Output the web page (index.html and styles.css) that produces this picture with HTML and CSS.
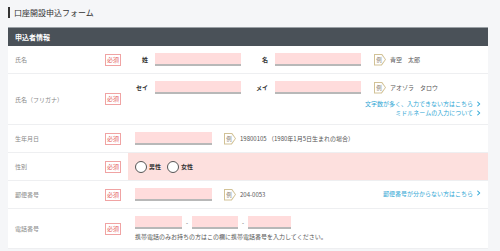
FILE: index.html
```html
<!DOCTYPE html>
<html lang="ja">
<head>
    <meta charset="UTF-8">
    <meta name="viewport" content="width=device-width, initial-scale=1.0">
    <title>口座開設申込フォーム</title>
    <link rel="stylesheet" href="styles.css">
</head>
<body>
    <h1 class="title">口座開設申込フォーム</h1>
    <section class="panel">
        <h2 class="panel-head">申込者情報</h2>

        <div class="row">
            <div class="label"><span>氏名</span><span class="req">必須</span></div>
            <div class="field">
                <div class="line">
                    <span class="sub">姓</span><input class="input w86" type="text">
                    <span class="sub next">名</span><input class="input w86" type="text">
                    <span class="ex"><span class="ex-mark"><span class="ex-inner">例</span></span>青空　太郎</span>
                </div>
            </div>
        </div>

        <div class="row">
            <div class="label"><span>氏名（フリガナ）</span><span class="req">必須</span></div>
            <div class="field">
                <div class="line">
                    <span class="sub">セイ</span><input class="input w86" type="text">
                    <span class="sub next">メイ</span><input class="input w86" type="text">
                    <span class="ex"><span class="ex-mark"><span class="ex-inner">例</span></span>アオゾラ　タロウ</span>
                </div>
                <div class="links">
                    <a href="#">文字数が多く、入力できない方はこちら<svg class="chev" viewBox="0 0 6 8"><polyline points="1.5,1 4.5,4 1.5,7"/></svg></a>
                    <a href="#">ミドルネームの入力について<svg class="chev" viewBox="0 0 6 8"><polyline points="1.5,1 4.5,4 1.5,7"/></svg></a>
                </div>
            </div>
        </div>

        <div class="row">
            <div class="label"><span>生年月日</span><span class="req">必須</span></div>
            <div class="field">
                <div class="line">
                    <input class="input w77" type="text">
                    <span class="ex wide"><span class="ex-mark"><span class="ex-inner">例</span></span>19800105 （1980年1月5日生まれの場合）</span>
                </div>
            </div>
        </div>

        <div class="row">
            <div class="label"><span>性別</span><span class="req">必須</span></div>
            <div class="field pink">
                <div class="line">
                    <label class="radio"><span class="circle"></span>男性</label>
                    <label class="radio"><span class="circle"></span>女性</label>
                </div>
            </div>
        </div>

        <div class="row">
            <div class="label"><span>郵便番号</span><span class="req">必須</span></div>
            <div class="field">
                <div class="line">
                    <input class="input w77" type="text">
                    <span class="ex wide"><span class="ex-mark"><span class="ex-inner">例</span></span>204-0053</span>
                    <a class="link-right" href="#">郵便番号が分からない方はこちら<svg class="chev" viewBox="0 0 6 8"><polyline points="1.5,1 4.5,4 1.5,7"/></svg></a>
                </div>
            </div>
        </div>

        <div class="row">
            <div class="label"><span>電話番号</span><span class="req">必須</span></div>
            <div class="field">
                <div class="line">
                    <input class="input w47" type="text">
                    <span class="dash">-</span>
                    <input class="input w46" type="text">
                    <span class="dash">-</span>
                    <input class="input w43" type="text">
                </div>
                <p class="note">携帯電話のみお持ちの方はこの欄に携帯電話番号を入力してください。</p>
            </div>
        </div>
    </section>
</body>
</html>
```

FILE: styles.css
```css
body {
    font-family: "Noto Sans CJK JP", "Noto Sans", sans-serif;
    background-color: #f5f6f8;
    color: #333;
    margin: 0;
    padding: 0;
    font-size: 6px;
}
.title {
    margin: 7px 0 9px 8px;
    padding-left: 4px;
    border-left: 2px solid #333;
    font-size: 8px;
    font-weight: normal;
    line-height: 11px;
    color: #333;
}
.panel {
    width: 480px;
    margin-left: 8px;
    background: #fff;
}
.panel-head {
    margin: 0;
    height: 19px;
    padding-left: 7px;
    background: #4a5158;
    border-top: 1px solid #9aa0a5;
    box-sizing: border-box;
    color: #fff;
    font-size: 7px;
    font-weight: bold;
    line-height: 18px;
}
.row {
    display: grid;
    grid-template-columns: 120px 1fr;
    border-bottom: 1px solid #eeeff1;
}
.label {
    display: flex;
    align-items: center;
    justify-content: space-between;
    padding: 0 7px;
    color: #888;
}
.req {
    width: 14px;
    height: 10px;
    border: 1px solid #f0a3a3;
    color: #e45b5b;
    text-align: center;
    line-height: 10px;
}
.field {
    padding: 7px;
}
.field.pink {
    background: #fde0de;
}
.line {
    display: flex;
    align-items: center;
    height: 13px;
}
.sub {
    width: 13px;
    margin-right: 7px;
    text-align: right;
    color: #333;
    font-weight: bold;
}
.sub.next {
    margin-left: 14px;
}
.input {
    height: 13px;
    padding: 0;
    border: none;
    border-bottom: 2px solid #b8b8b8;
    background: #ffdcdc;
    box-sizing: border-box;
}
.w86 { width: 86px; }
.w77 { width: 77px; }
.w47 { width: 47px; }
.w46 { width: 46px; }
.w43 { width: 43px; }
.ex {
    display: flex;
    align-items: center;
    margin-left: 13px;
    color: #555;
}
.ex.wide {
    margin-left: 12px;
}
.ex-mark {
    display: flex;
    width: 12px;
    height: 12px;
    margin-right: 4px;
    background: #d2c296;
    clip-path: polygon(0 0, 65% 0, 100% 50%, 65% 100%, 0 100%);
}
.ex-inner {
    width: 10px;
    height: 10px;
    margin: 1px;
    background: #fff;
    color: #8a8170;
    font-size: 5.5px;
    line-height: 10px;
    text-align: center;
    padding-right: 2px;
    box-sizing: border-box;
    clip-path: polygon(0 0, 62% 0, 100% 50%, 62% 100%, 0 100%);
}
.links {
    display: flex;
    flex-direction: column;
    align-items: flex-end;
    margin-top: 5px;
}
.links a, .link-right {
    display: flex;
    align-items: center;
    height: 9px;
    color: #2ea6d4;
    text-decoration: none;
}
.link-right {
    margin-left: auto;
    margin-top: -3px;
}
.chev {
    width: 5px;
    height: 6px;
    margin-left: 3px;
    fill: none;
    stroke: #2ea6d4;
    stroke-width: 1.4;
}
.radio {
    display: flex;
    align-items: center;
    margin-right: 6px;
    font-weight: bold;
    color: #333;
}
.circle {
    width: 10px;
    height: 10px;
    margin-right: 2px;
    border: 1px solid #555;
    border-radius: 50%;
    background: #fff;
}
.dash {
    width: 10px;
    text-align: center;
    color: #555;
}
.note {
    margin: 3px 0 0;
    height: 9px;
    line-height: 9px;
    color: #555;
}
```
